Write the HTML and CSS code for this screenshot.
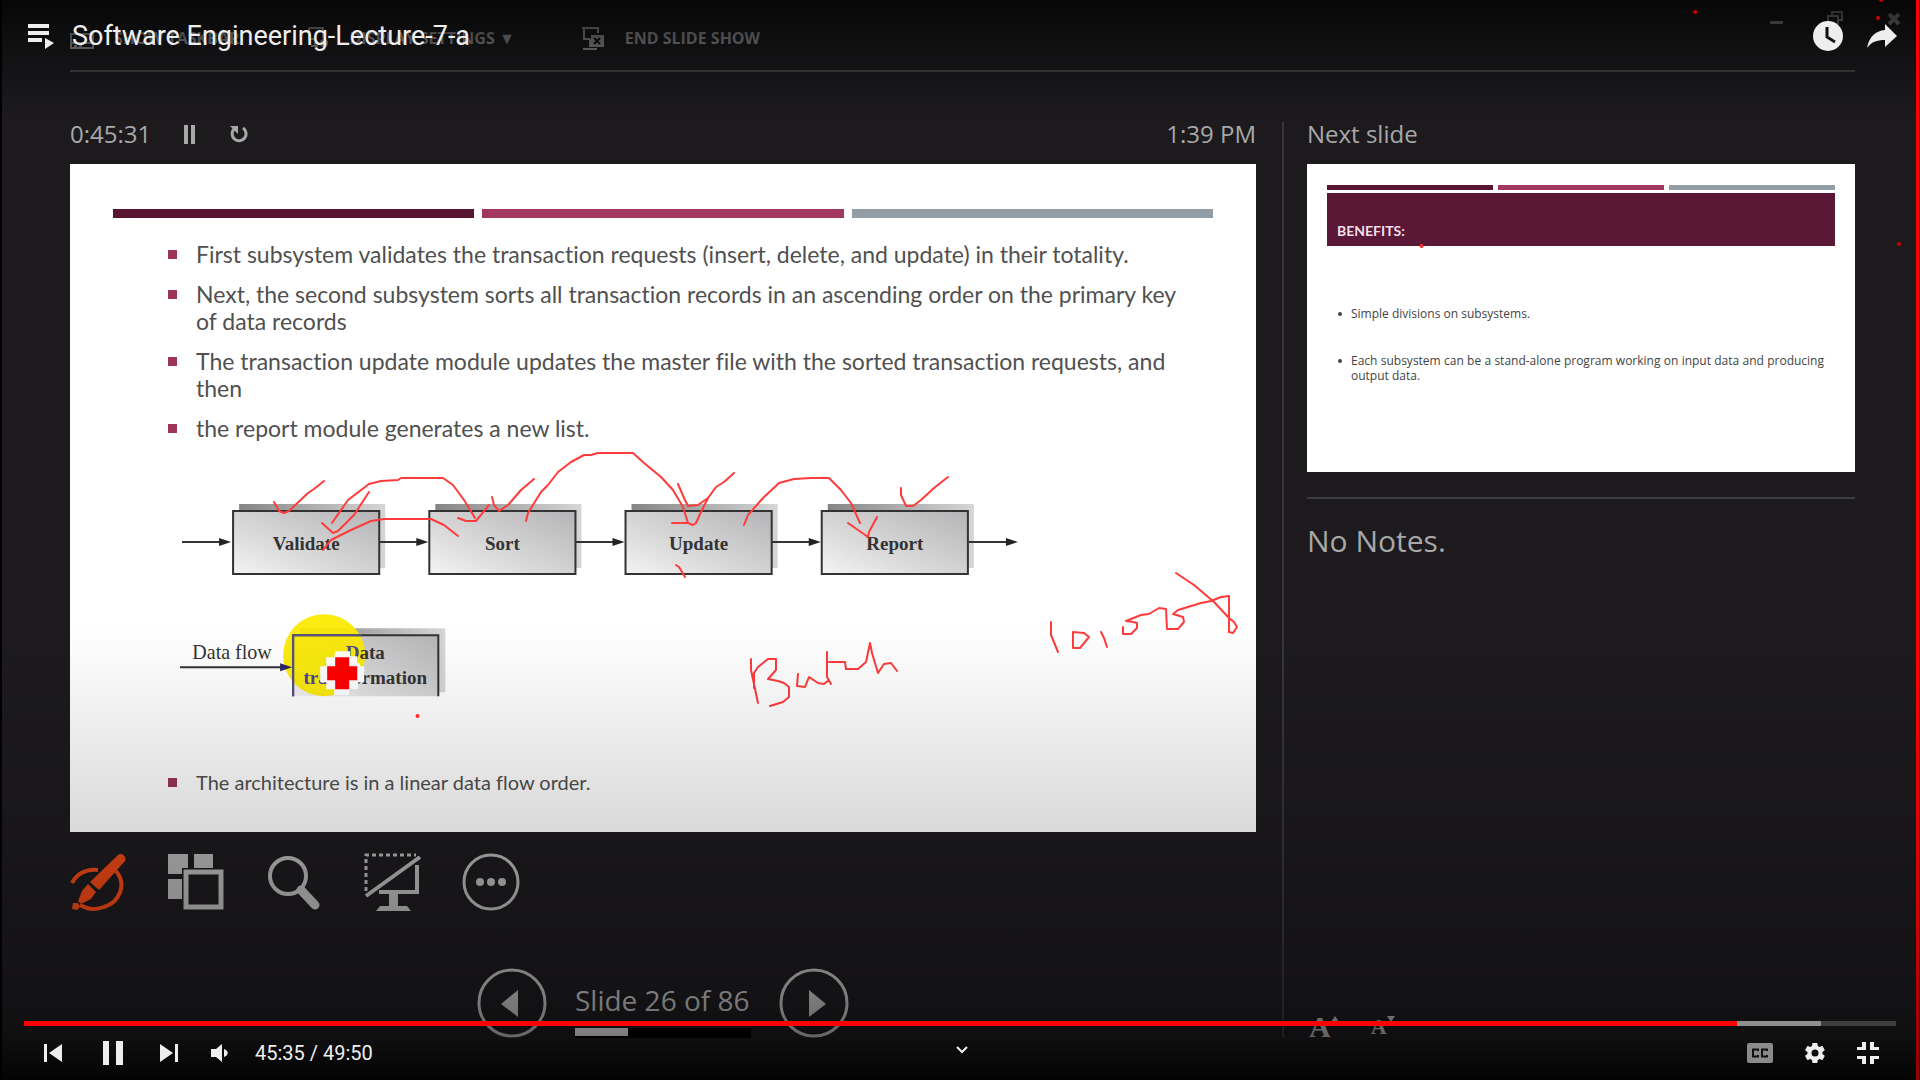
FILE: index.html
```html
<!DOCTYPE html>
<html lang="en">
<head>
<meta charset="utf-8">
<meta name="viewport" content="width=device-width, initial-scale=1">
<title>Software Engineering-Lecture-7-a</title>
<link rel="stylesheet" href="styles.css">
</head>
<body>
<div class="screen">

  <!-- Presenter view shown inside the video -->
  <div class="presenter">
    <header class="toolbar">
      <button class="tool-link" type="button">
        <svg class="tool-link-icon" viewBox="0 0 24 24"><path d="M1 8h22v14H1zM1 17h22" fill="none" stroke="currentColor" stroke-width="2"/><path d="M4 19h3v2H4zM9 19h3v2H9z"/></svg>
        SHOW TASKBAR
      </button>
      <button class="tool-link" type="button">
        <svg class="tool-link-icon" viewBox="0 0 24 24"><path d="M3 2h14v10M3 2v11h7M9 13v6M5 20h7" fill="none" stroke="currentColor" stroke-width="2"/><circle cx="18" cy="17" r="4"/></svg>
        DISPLAY SETTINGS ▼
      </button>
      <button class="tool-link" type="button">
        <svg class="tool-link-icon" viewBox="0 0 24 24"><path d="M1 2h16v5M3 2v11h6M9 13v8M2 23h14" fill="none" stroke="currentColor" stroke-width="2"/><path d="M10 9h13v12H10z"/><path d="M13 12l6 6M19 12l-6 6" stroke="#111" stroke-width="2"/></svg>
        END SLIDE SHOW
      </button>
    </header>

    <div class="columns">
      <main class="current">
        <div class="meta">
          <span>0:45:31</span>
          <button class="meta-button" type="button" aria-label="Pause timer">
            <svg width="14" height="20" viewBox="0 0 14 20"><path d="M1 1h4v19H1zM8 1h4v19H8z"/></svg>
          </button>
          <button class="meta-button" type="button" aria-label="Restart timer">
            <svg width="20" height="20" viewBox="0 0 20 20"><path d="M14 4a7 7 0 1 1-9 1" fill="none" stroke="currentColor" stroke-width="3"/><path d="M1 2h8v8z"/></svg>
          </button>
          <span class="clock">1:39 PM</span>
        </div>

        <section class="slide">
          <div class="bars"><i class="bar dark"></i><i class="bar rose"></i><i class="bar grey"></i></div>
          <ul class="points">
            <li>First subsystem validates the transaction requests (insert, delete, and update) in their totality.</li>
            <li>Next, the second subsystem sorts all transaction records in an ascending order on the primary key<br>of data records</li>
            <li>The transaction update module updates the master file with the sorted transaction requests, and<br>then</li>
            <li>the report module generates a new list.</li>
          </ul>

          <svg class="diagram" viewBox="180 494 857 210" role="img" aria-label="Data flow from Validate to Report">
            <defs>
              <linearGradient id="face" x1="0" y1="1" x2="1" y2="0">
                <stop offset="0" stop-color="#f4f4f4"/><stop offset=".35" stop-color="#dcdcdd"/><stop offset="1" stop-color="#b4b4b6"/>
              </linearGradient>
              <linearGradient id="shade" x1="0" y1="0" x2="1" y2="0">
                <stop offset="0" stop-color="#858585"/><stop offset="1" stop-color="#d6d6d7"/>
              </linearGradient>
              <g id="step">
                <path d="M7-7h146v64H7z" fill="url(#shade)"/>
                <path d="M1 0h146v63H1z" fill="url(#face)" stroke="#333" stroke-width="2"/>
              </g>
              <g id="arrow">
                <path d="M0 0h42" stroke="#333" stroke-width="2"/><path d="M37-4L49 0 37 4z" fill="#222"/>
              </g>
            </defs>
            <use href="#step" x="232" y="510"/><use href="#step" x="428" y="510"/>
            <use href="#step" x="624" y="510"/><use href="#step" x="820" y="510"/>
            <use href="#arrow" x="182" y="541"/><use href="#arrow" x="379" y="541"/><use href="#arrow" x="575" y="541"/>
            <use href="#arrow" x="771" y="541"/><use href="#arrow" x="968" y="541"/>
            <g class="step-name">
              <text x="306" y="549">Validate</text><text x="502" y="549">Sort</text>
              <text x="698" y="549">Update</text><text x="894" y="549">Report</text>
            </g>
            <path d="M299 627h146v64H299z" fill="url(#shade)"/>
            <path d="M292 634h146v61H292z" fill="url(#face)"/>
            <circle class="spot" cx="324" cy="654" r="41"/>
            <path d="M293 695v-61h145v61" fill="none" stroke="#333" stroke-width="2"/>
            <path d="M293 695v-61h68" fill="none" stroke="#57508a" stroke-width="2"/>
            <path d="M180 666h104" stroke="#333" stroke-width="2"/><path d="M280 662l12 4-12 4z" fill="#2b2566"/>
            <text class="flow-name" x="232" y="658">Data flow</text>
            <g class="step-name">
              <text x="365" y="658"><tspan class="tinted">D</tspan>ata</text>
              <text x="365" y="683"><tspan class="tinted">tran</tspan>sformation</text>
            </g>
            <path d="M335 650h15v5h7v7h3v3h4v16h-6v7h-9v6h-15v-6h-8v-7h-6v-16h6v-9h8z" fill="#fff"/>
            <path d="M335 656h14v9h8v14h-8v9h-14v-9h-8v-14h8z" fill="#f00"/>
          </svg>

          <ul class="points closing">
            <li>The architecture is in a linear data flow order.</li>
          </ul>

          <!-- Pen annotations -->
          <svg class="ink" viewBox="69 164 1186 668" aria-hidden="true">
            <path d="M273 502l5 9 5 2 5-2 19-18 6-4 10-8"/>
            <path d="M331 523l16-23 21-16 12-3 17-1 3-2h42l10 7 11 15 11 18"/>
            <path d="M457 518l8 3h10l13-16"/>
            <path d="M321 523l11 10 5-2 16-16 15-23"/>
            <path d="M457 536l-14-11-13-6h-47l-13 2-20 9-20 10-8 10"/>
            <path d="M491 497l2 8 5 6 9-6 13-15 13-11"/>
            <path d="M525 521l2-8 13-21 7-7 10-13 13-10 13-7h7l7-2h35l11 10 17 14 12 13 10 17 5 16"/>
            <path d="M671 523h16l5 2 3-2 5-11 7-14"/>
            <path d="M677 484l6 14 4 8 10-1 10-7 8-11 8-5 10-9"/>
            <path d="M743 525l4-10 15-17 16-15 15-4 17-1h18l12 12 10 13 9 20"/>
            <path d="M847 523l20 14 1-5 8-15"/>
            <path d="M900 488v7l5 11h7l8-6 13-12 14-11"/>
            <path d="M675 565l3 2 6 10"/>
            <path d="M750 659v11l7 33M753 688v-15l4-6 10-8h8v11l-8 9 10 2 6 2 5 4v10l-6 5-13 4"/>
            <path d="M797 674l-1 12 8 1 4-10 9 6 6 1 5-4M826 652v25l4 7M828 662h16l1 7h12l8-7 4-19 2 10 6 20 6-9 7-1 6 8"/>
            <path d="M1050 622v13l7 17M1072 632v16h7l9-11-5-4zM1100 632l3 6 3 9"/>
            <path d="M1122 627v7h8l6-6v-5l-4-1-7-1 15-6 8-1 10-6 7 1 1 20h11l6-7-1-5-10-3 5-4 23-7 10-2 10-4 8-1v36l4 1 4-6-3-5-5-4-15-16-20-17-18-12"/>
          </svg>
        </section>

        <div class="tools">
          <button class="tool pen" type="button" aria-label="Pen and laser pointer tools">
            <svg viewBox="0 0 58 58"><path d="M2 30c5-9 14-14 26-13M46 18c11 13 4 31-12 36-8 3-17 2-24-2" fill="none" stroke="currentColor" stroke-width="4"/><path d="M48 2c4-3 9 2 7 6L29 37l-9-8z"/><path d="M18 31l8 8-5 7-10 5-3-3 4-10z"/><path d="M3 50l5 0 2 4-3 3-5-1z"/></svg>
          </button>
          <button class="tool" type="button" aria-label="See all slides">
            <svg viewBox="0 0 58 58"><path d="M0 1h20v14h-6v6H0zM26 1h19v14H26zM0 26h14v20H0z"/><path d="M18 19h35v35H18z" fill="none" stroke="currentColor" stroke-width="5"/></svg>
          </button>
          <button class="tool" type="button" aria-label="Zoom into the slide">
            <svg viewBox="0 0 58 58"><circle cx="22" cy="23" r="18" fill="none" stroke="currentColor" stroke-width="4"/><path d="M35 37l14 15" stroke="currentColor" stroke-width="9" stroke-linecap="round"/></svg>
          </button>
          <button class="tool" type="button" aria-label="Black or unblack slide show">
            <svg viewBox="0 0 58 58"><path d="M2 38V2h50" fill="none" stroke="currentColor" stroke-width="3" stroke-dasharray="4 3"/><path d="M2 43L56 4M53 12v27H15" fill="none" stroke="currentColor" stroke-width="4"/><path d="M25 39h9v14h9l4 5H12l4-5h9z"/></svg>
          </button>
          <button class="tool" type="button" aria-label="More slide show options">
            <svg viewBox="0 0 58 58"><circle cx="29" cy="29" r="27" fill="none" stroke="currentColor" stroke-width="3"/><circle cx="18" cy="29" r="4"/><circle cx="29" cy="29" r="4"/><circle cx="40" cy="29" r="4"/></svg>
          </button>
        </div>

        <nav class="pager">
          <button class="round" type="button" aria-label="Previous slide"><svg viewBox="0 0 70 70"><circle cx="35" cy="35" r="33" fill="none" stroke="currentColor" stroke-width="3"/><path d="M41 22v27L24 36z"/></svg></button>
          <div class="position">
            <label for="slides-done">Slide 26 of 86</label>
            <progress id="slides-done" class="slides-done" value="26" max="86"></progress>
          </div>
          <button class="round" type="button" aria-label="Next slide"><svg viewBox="0 0 70 70"><circle cx="35" cy="35" r="33" fill="none" stroke="currentColor" stroke-width="3"/><path d="M30 22v27l17-13z"/></svg></button>
        </nav>
      </main>

      <aside class="side">
        <h2 class="side-title">Next slide</h2>
        <section class="thumb">
          <div class="thumb-bars"><i class="bar dark"></i><i class="bar rose"></i><i class="bar grey"></i></div>
          <h3 class="banner">BENEFITS:</h3>
          <ul class="thumb-points">
            <li>Simple divisions on subsystems.</li>
            <li>Each subsystem can be a stand-alone program working on input data and producing output data.</li>
          </ul>
        </section>
        <p class="notes">No Notes.</p>
        <div class="text-size">
          <button class="size-button larger" type="button" aria-label="Make the text larger">A<svg width="8" height="6" viewBox="0 0 8 6"><path d="M4 0l4 6H0z"/></svg></button>
          <button class="size-button smaller" type="button" aria-label="Make the text smaller">A<svg width="8" height="6" viewBox="0 0 8 6"><path d="M0 0h8L4 6z"/></svg></button>
        </div>
      </aside>
    </div>
  </div>

  <svg class="window-buttons" width="132" height="18" viewBox="0 0 132 18" aria-hidden="true">
    <path d="M0 11h13v3H0z"/><path d="M58 6h10v8H58zM62 5V2h10v8h-3" fill="none" stroke="currentColor" stroke-width="2"/><path d="M119 4l10 10M129 4l-10 10" stroke="currentColor" stroke-width="4"/>
  </svg>
  <div class="shade"></div>

  <svg class="specks" viewBox="0 0 1920 1080" preserveAspectRatio="none" aria-hidden="true">
    <g fill="#d00000"><circle cx="1695" cy="12" r="2"/><circle cx="1881" cy="0" r="2"/><circle cx="1878" cy="18" r="2"/><circle cx="1899" cy="244" r="2"/></g>
    <g fill="#ff2a2a"><circle cx="1421" cy="246" r="2"/><circle cx="416" cy="716" r="2"/></g>
  </svg>

  <!-- Video player controls -->
  <div class="player">
    <div class="player-top">
      <button class="icon-button" type="button" aria-label="Playlist"><svg width="26" height="26" viewBox="0 0 26 26"><path d="M0 1h21v4H0zM0 8h21v4H0zM0 15h14v4H0zM17 15v11l9-6z"/></svg></button>
      <h1 class="title">Software Engineering-Lecture-7-a</h1>
      <div class="top-actions">
        <button class="icon-button" type="button" aria-label="Watch later"><svg width="30" height="30" viewBox="0 0 30 30"><circle cx="15" cy="15" r="15"/><path d="M14 6v10l8 5" fill="none" stroke="#111" stroke-width="3"/></svg></button>
        <button class="icon-button" type="button" aria-label="Share"><svg width="30" height="24" viewBox="0 0 30 24"><path d="M18 0l12 12-12 11v-7C10 16 4 18 0 24 2 13 8 7 18 6z"/></svg></button>
      </div>
    </div>

    <div class="player-bottom">
      <input class="seek" type="range" min="0" max="2990" value="2735" aria-label="Seek">
      <div class="controls">
        <div class="controls-left">
          <button class="icon-button" type="button" aria-label="Previous video"><svg width="18" height="18" viewBox="0 0 18 18"><path d="M0 0h3v18H0zM18 0v18L5 9z"/></svg></button>
          <button class="icon-button pause" type="button" aria-label="Pause"><svg width="20" height="24" viewBox="0 0 20 24"><path d="M0 0h6v24H0zM13 0h7v24h-7z"/></svg></button>
          <button class="icon-button" type="button" aria-label="Next video"><svg width="18" height="18" viewBox="0 0 18 18"><path d="M15 0h3v18h-3zM0 0v18l13-9z"/></svg></button>
          <button class="icon-button volume" type="button" aria-label="Mute"><svg width="17" height="18" viewBox="0 0 17 18"><path d="M0 5h5l6-5v18l-6-5H0zM13 5c5 2 5 6 0 8z"/></svg></button>
          <span class="time">45:35 / 49:50</span>
        </div>
        <button class="icon-button more" type="button" aria-label="Scroll for details"><svg width="12" height="8" viewBox="0 0 12 8"><path d="M1 1l5 5 5-5" fill="none" stroke="currentColor" stroke-width="2"/></svg></button>
        <div class="controls-right">
          <button class="icon-button captions" type="button" aria-label="Subtitles"><svg width="26" height="20" viewBox="0 0 26 20"><rect width="26" height="20" rx="2"/><path d="M11 8V6.500H6v7h5V12M20 8V6.500h-5v7h5V12" fill="none" stroke="#111" stroke-width="2"/></svg></button>
          <button class="icon-button" type="button" aria-label="Settings"><svg width="24" height="24" viewBox="0 0 24 24"><path d="M19.400 13c.1-.7.1-1.300 0-2l2.100-1.600c.2-.2.300-.4.100-.7l-2-3.400c-.1-.2-.4-.3-.6-.2l-2.500 1c-.5-.4-1.100-.7-1.700-1L14.400 2.400c0-.2-.2-.4-.5-.4h-4c-.3 0-.5.2-.5.400L9 5.100c-.6.3-1.200.6-1.700 1l-2.500-1c-.2-.1-.5 0-.6.200l-2 3.400c-.1.300-.1.500.1.700L4.500 11c-.1.700-.1 1.300 0 2l-2.200 1.600c-.2.200-.2.400-.1.700l2 3.400c.1.200.4.300.6.200l2.500-1c.5.400 1.100.7 1.700 1l.4 2.700c0 .2.200.4.500.4h4c.3 0 .5-.2.500-.4l.4-2.700c.6-.3 1.200-.6 1.700-1l2.500 1c.2.100.5 0 .6-.2l2-3.400c.1-.3.100-.5-.1-.7zM12 15.500a3.500 3.500 0 1 1 0-7 3.500 3.500 0 0 1 0 7z"/></svg></button>
          <button class="icon-button" type="button" aria-label="Exit full screen"><svg width="22" height="22" viewBox="0 0 22 22"><path d="M5 0h4v8H0V5h5zM13 0h4v5h5v3h-9zM0 14h9v8H5v-5H0zM13 14h9v3h-5v5h-4z"/></svg></button>
        </div>
      </div>
    </div>
  </div>
</div>
</body>
</html>
```
FILE: styles.css
```css
* { box-sizing: border-box; }

body {
  margin: 0;
  background: #000;
  font-family: "Open Sans", "Noto Sans", sans-serif;
  color: #a8a8a8;
}

h1, h2, h3, p, ul { margin: 0; padding: 0; font-weight: 400; }
ul { list-style: none; }
svg { display: block; fill: currentColor; }
button {
  padding: 0;
  border: 0;
  background: none;
  color: inherit;
  font: inherit;
  cursor: pointer;
}

.screen {
  position: relative;
  min-height: 100vh;
  overflow: hidden;
  background: #1c1a1d;
  border-left: 2px solid #000;
}
.screen::after {
  content: "";
  position: absolute;
  inset: 0 1px 0 auto;
  width: 3px;
  background: linear-gradient(#f00 60%, #d00000 85%, #900000);
}

/* Presenter view */
.presenter { padding: 0 65px 42px 68px; }

.toolbar {
  display: flex;
  align-items: center;
  height: 72px;
  padding-top: 6px;
  border-bottom: 2px solid #444345;
}
.tool-link {
  display: flex;
  align-items: center;
  gap: 20px;
  margin-right: 66px;
  color: #949494;
  font-size: 16px;
  font-weight: 700;
  line-height: 24px;
}
.tool-link-icon { width: 24px; height: 24px; }

.columns {
  display: grid;
  grid-template-columns: 1186fr 573fr;
  gap: 26px;
  padding-top: 50px;
}

.meta {
  display: flex;
  align-items: center;
  height: 24px;
  margin-bottom: 18px;
  font-size: 24px;
  line-height: 24px;
}
.meta-button { margin-left: 32px; }
.clock { margin-left: auto; }

.slide {
  position: relative;
  display: flex;
  flex-direction: column;
  aspect-ratio: 1186 / 668;
  padding: 45px 43px 36px 43px;
  background: #fff;
  color: #505050;
  font-family: Lato, "Open Sans", sans-serif;
  font-variant-ligatures: none;
}
.bars { display: grid; grid-template-columns: 1fr 1fr 1fr; gap: 8px; }
.bar { height: 9px; }
.dark { background: #571531; }
.rose { background: #a2375f; }
.grey { background: #929da5; }

.points {
  display: grid;
  gap: 13px;
  padding: 23px 0 0 83px;
  font-size: 23px;
  line-height: 27px;
  white-space: nowrap;
}
.points li { position: relative; }
.points li::before {
  content: "";
  position: absolute;
  left: -28px;
  top: 9px;
  width: 9px;
  height: 9px;
  background: #9c3558;
}
.diagram { width: 78%; margin: 53px 0 0 67px; }
.closing { margin-top: auto; padding-top: 0; font-size: 20px; }

.step-name { fill: #333; font: 700 19px "Liberation Serif", serif; text-anchor: middle; }
.flow-name { fill: #333; font: 400 20px "Liberation Serif", serif; text-anchor: middle; }
.tinted { fill: #4c4590; }
.spot { fill: #fbea00; fill-opacity: .94; }

.ink {
  position: absolute;
  inset: 0;
  width: 100%;
  height: 100%;
  fill: none;
  stroke: #ff3b3b;
  stroke-width: 2;
  stroke-linecap: round;
  stroke-linejoin: round;
}

.tools { display: flex; gap: 40px; margin-top: 21px; }
.tool { width: 58px; height: 58px; color: #b4b4b4; }
.pen { color: #ea4716; }

.pager {
  display: flex;
  justify-content: center;
  align-items: center;
  gap: 28px;
  height: 70px;
  margin-top: 57px;
  color: #b8b8b8;
}
.round { width: 70px; height: 70px; }
.position {
  display: grid;
  gap: 10px;
  width: 176px;
  font-size: 28px;
  line-height: 36px;
  padding-top: 14px;
  white-space: nowrap;
}
.slides-done {
  display: block;
  width: 100%;
  height: 10px;
  border: 0;
  appearance: none;
  background: #000;
}
.slides-done::-webkit-progress-bar { background: #000; }
.slides-done::-webkit-progress-value { background: #e0e0e0; border-bottom: 2px solid #000; }

.side {
  display: flex;
  flex-direction: column;
  padding-left: 23px;
  border-left: 2px solid #363537;
}
.side-title { height: 24px; margin-bottom: 18px; font-size: 24px; line-height: 24px; }
.thumb {
  aspect-ratio: 548 / 308;
  padding: 21px 20px 0;
  background: #fff;
  color: #444;
  font-family: "Open Sans", sans-serif;
}
.thumb-bars { display: grid; grid-template-columns: 1fr 1fr 1fr; gap: 5px; margin-bottom: 3px; }
.thumb-bars .bar { height: 5px; }
.banner {
  padding: 28px 10px 5px;
  background: #5b1736;
  color: #f3dfe8;
  font-family: Lato, sans-serif;
  font-size: 14px;
  font-weight: 700;
  line-height: 20px;
}
.thumb-points {
  display: grid;
  gap: 32px;
  padding: 60px 11px 0 24px;
  font-size: 12px;
  line-height: 15px;
  text-align: justify;
}
.thumb-points li { position: relative; }
.thumb-points li::before {
  content: "";
  position: absolute;
  left: -13px;
  top: 6px;
  width: 4px;
  height: 4px;
  border-radius: 50%;
  background: #444;
}
.notes {
  margin-top: 25px;
  padding-top: 22px;
  border-top: 2px solid #3e3d3f;
  font-size: 30px;
  line-height: 40px;
}
.text-size { display: flex; align-items: flex-end; gap: 32px; height: 24px; margin-top: auto; padding-left: 2px; color: #b4b4b4; }
.size-button { display: flex; font-family: "Liberation Serif", serif; font-weight: 700; line-height: 22px; }
.larger { font-size: 30px; }
.smaller { font-size: 22px; }

.window-buttons { position: absolute; top: 10px; right: 18px; color: #8c8c8c; }

/* Darkening behind the player controls */
.shade {
  position: absolute;
  inset: 0;
  background:
    linear-gradient(rgba(0, 0, 0, .75) 0, rgba(0, 0, 0, .4) 50px, rgba(0, 0, 0, 0) 120px),
    linear-gradient(transparent 58%, rgba(0, 0, 0, .15) 77%, rgba(0, 0, 0, .32) 92%, rgba(0, 0, 0, .45) 96%, rgba(0, 0, 0, .85) 100%);
}

.specks { position: absolute; inset: 0; width: 100%; height: 100%; }

/* Video player */
.player {
  position: absolute;
  inset: 0;
  display: flex;
  flex-direction: column;
  justify-content: space-between;
  color: #eee;
  font-family: Roboto, sans-serif;
}
.player-top { display: flex; align-items: center; height: 72px; padding: 0 23px 0 26px; }
.title { margin-left: 18px; font-size: 27px; line-height: 32px; }
.top-actions { display: flex; align-items: center; gap: 24px; margin-left: auto; }

.player-bottom { padding: 0 24px 0 22px; }
.seek {
  display: block;
  width: 100%;
  height: 5px;
  margin: 0;
  appearance: none;
  background: linear-gradient(90deg, #f00 91.500%, #8f8f8f 91.500%, #8f8f8f 96%, #3e3e3e 96%);
}
.seek::-webkit-slider-thumb { appearance: none; width: 1px; height: 5px; background: #f00; }
.controls {
  display: grid;
  grid-template-columns: 1fr auto 1fr;
  align-items: center;
  height: 54px;
  padding: 0 17px 0 20px;
}
.controls-left, .controls-right { display: flex; align-items: center; }
.controls-right { justify-content: flex-end; gap: 30px; }
.pause { margin: 0 37px 0 41px; }
.volume { margin: 0 27px 0 33px; }
.time { font-size: 20px; line-height: 24px; }
.more { margin-bottom: 6px; }
.captions { color: #8a8a8a; }
```
